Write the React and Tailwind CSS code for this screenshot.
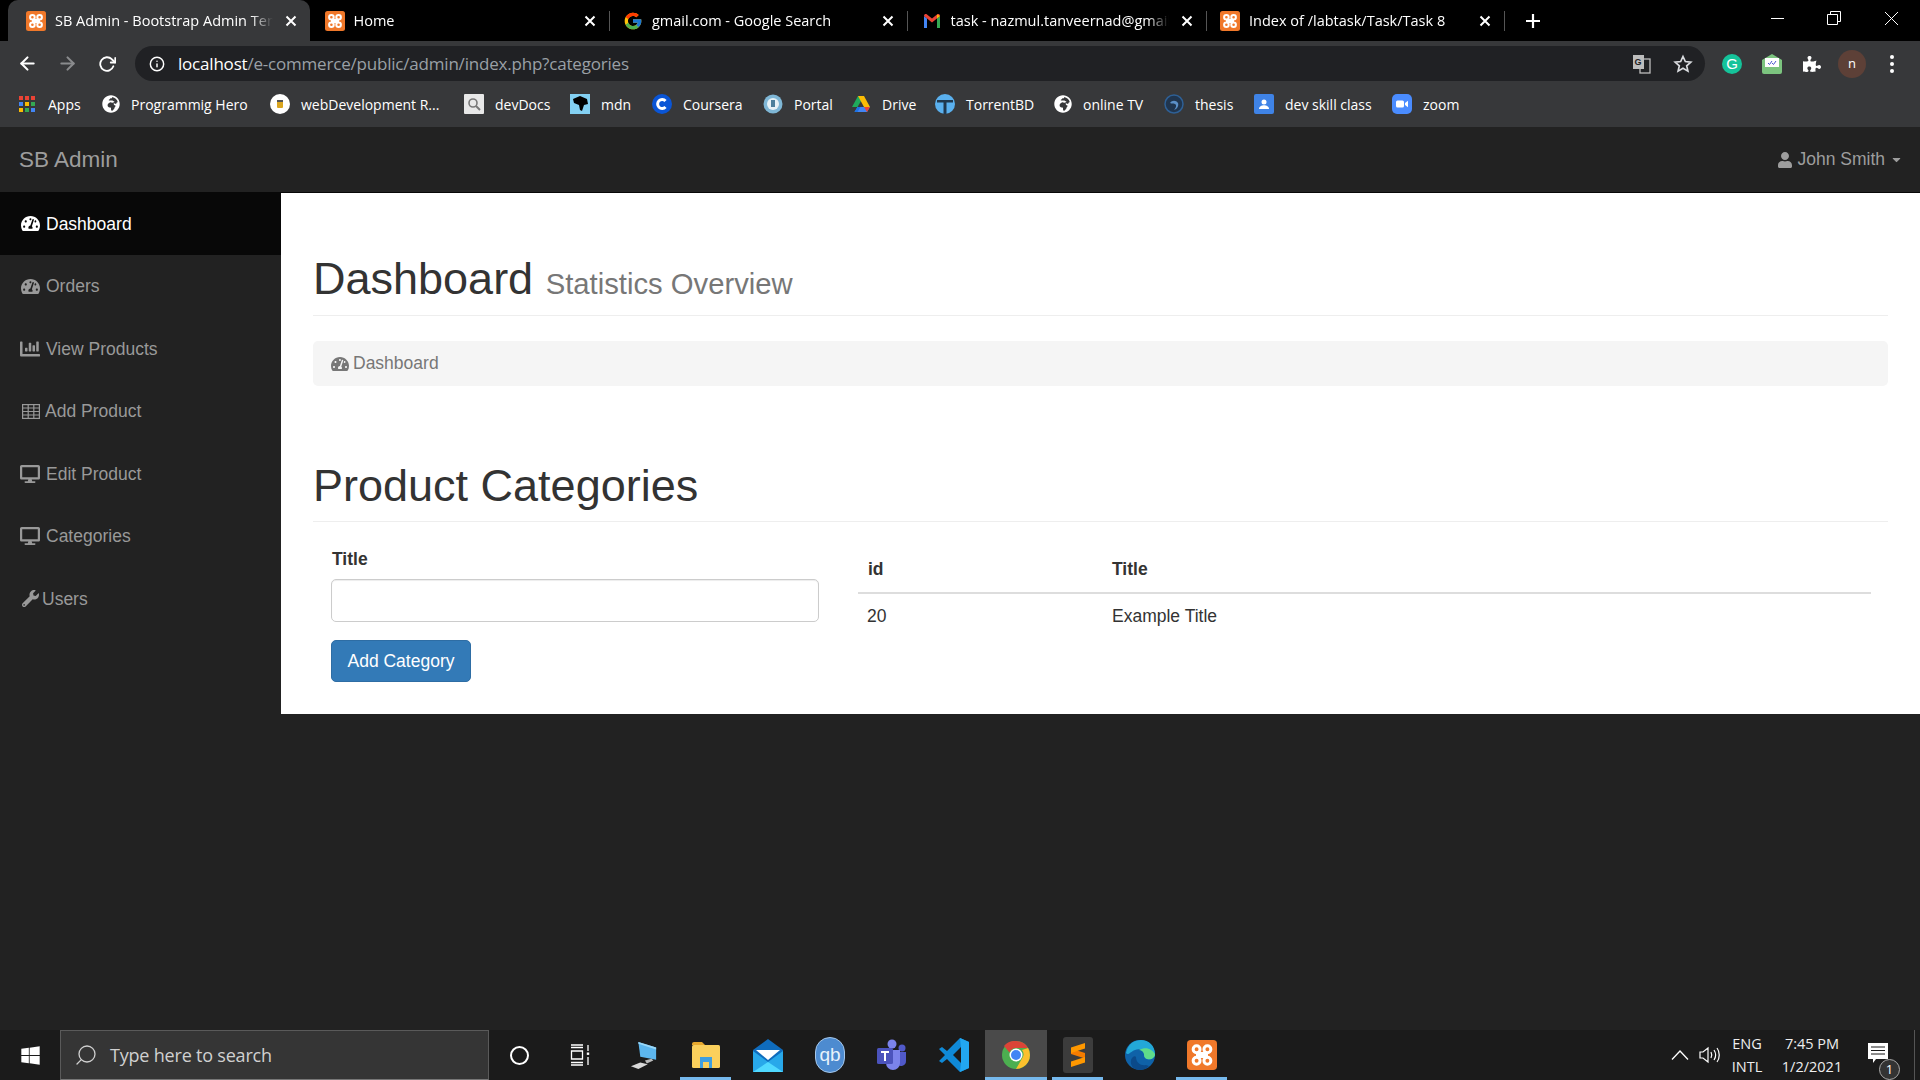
import React from "react";
import { FaTachometerAlt, FaChartBar, FaDesktop, FaWrench, FaUser, FaCaretDown, FaWindows, FaGlobeAfrica, FaPuzzlePiece } from "react-icons/fa";
import { FcGoogle } from "react-icons/fc";
import { FiArrowLeft, FiArrowRight, FiRotateCw, FiInfo, FiSearch } from "react-icons/fi";

const Xampp = ({ s = 20 }) => (
  <svg width={s} height={s} viewBox="0 0 20 20" className="shrink-0">
    <rect width="20" height="20" rx="2.5" fill="#f0782a" />
    <g fill="none" stroke="#fff" strokeWidth="2">
      <circle cx="6.4" cy="6.2" r="2.3" />
      <circle cx="13.6" cy="6.2" r="2.3" />
      <circle cx="6.4" cy="13.8" r="2.3" />
      <circle cx="13.6" cy="13.8" r="2.3" />
    </g>
    <rect x="6" y="8" width="8" height="4" fill="#fff" />
  </svg>
);
const Gmail = () => (
  <svg width="20" height="20" viewBox="0 0 20 20" className="shrink-0">
    <path d="M2 17V5l3 2.5V17z" fill="#4285f4" />
    <path d="M15 17V7.5L18 5v12z" fill="#34a853" />
    <path d="M2 5c0-2 2-2.500 3-1.500l5 4 5-4c1-1 3-.5 3 1.500l-8 6.500z" fill="#ea4335" />
    <path d="M15 3.500l3 1.500-3 2.500z" fill="#fbbc04" />
  </svg>
);
const Globe = () => <FaGlobeAfrica size={18} className="text-white ml-[1px] shrink-0" />;
const Apps = () => (
  <svg width="20" height="20" viewBox="0 0 20 20" className="shrink-0">
    {[["#ea4335", "#ea4335", "#ea4335"], ["#4285f4", "#fbbc04", "#34a853"], ["#fbbc04", "#34a853", "#4285f4"]].map((r, i) =>
      r.map((c, j) => <rect key={i + "-" + j} x={2 + j * 6} y={2 + i * 6} width="4" height="4" fill={c} />)
    )}
  </svg>
);
const Beer = () => (
  <svg width="20" height="20" viewBox="0 0 20 20" className="shrink-0">
    <circle cx="10" cy="10" r="10" fill="#fff" />
    <rect x="7" y="6" width="6" height="8" rx="1" fill="#d9a520" />
    <rect x="7" y="6" width="6" height="2" fill="#555" />
  </svg>
);
const DevDocs = () => (
  <svg width="20" height="20" viewBox="0 0 20 20" className="shrink-0">
    <rect width="20" height="20" rx="1" fill="#e8e8e8" />
    <circle cx="9" cy="9" r="4" fill="none" stroke="#777" strokeWidth="1.6" />
    <path d="M12 12l4 4" stroke="#777" strokeWidth="2" />
  </svg>
);
const Mdn = () => (
  <svg width="20" height="20" viewBox="0 0 20 20" className="shrink-0">
    <rect width="20" height="20" fill="#83d0f2" />
    <path d="M3 5l7-3 7 3 1 5-4 1-2 6-2-1-1-5-5-2z" fill="#000" />
  </svg>
);
const Coursera = () => (
  <svg width="20" height="20" viewBox="0 0 20 20" className="shrink-0">
    <circle cx="10" cy="10" r="10" fill="#0a55d6" />
    <path d="M13.500 7a4.500 4.500 0 1 0 0 6" fill="none" stroke="#fff" strokeWidth="3" />
  </svg>
);
const Portal = () => (
  <svg width="20" height="20" viewBox="0 0 20 20" className="shrink-0">
    <circle cx="10" cy="10" r="9.500" fill="#7fb7d6" />
    <circle cx="10" cy="10" r="6" fill="#e6f1f6" />
    <rect x="8" y="6" width="4" height="7" fill="#4c7f9c" />
  </svg>
);
const Drive = () => (
  <svg width="20" height="20" viewBox="0 0 20 20" className="shrink-0">
    <path d="M7 2h6l-6.500 11H1z" fill="#1faa5c" />
    <path d="M13 2l6 11h-6L7 2z" fill="#fbbc04" />
    <path d="M6.500 13H19l-3 5H3.500z" fill="#4285f4" />
    <path d="M3.500 18l3-5h3l-3 5z" fill="#1a73e8" />
    <path d="M13 13h6l-3 5z" fill="#ea4335" />
  </svg>
);
const Torrent = () => (
  <svg width="20" height="20" viewBox="0 0 20 20" className="shrink-0">
    <circle cx="10" cy="10" r="10" fill="#5ab0ee" />
    <path d="M2 6h16v2.500h-6.500V20h-3V8.500H2z" fill="#20384e" />
  </svg>
);
const Thesis = () => (
  <svg width="20" height="20" viewBox="0 0 20 20" className="shrink-0">
    <circle cx="10" cy="10" r="9" fill="#20354e" stroke="#2e6096" strokeWidth="1.500" />
    <path d="M6 9c2-3 6-3 8 0 1 3-1 6-4 7 2-2 3-5 1-6-2-1-3 0-5-1z" fill="#5b8fc7" />
  </svg>
);
const Classroom = () => (
  <svg width="20" height="20" viewBox="0 0 20 20" className="shrink-0">
    <rect width="20" height="20" rx="2" fill="#3f83e6" />
    <circle cx="10" cy="8" r="2.500" fill="#fff" />
    <path d="M5 15c0-5 10-5 10 0z" fill="#fff" />
  </svg>
);
const Zoom = () => (
  <svg width="20" height="20" viewBox="0 0 20 20" className="shrink-0">
    <rect width="20" height="20" rx="5" fill="#4a8cff" />
    <rect x="4" y="6.500" width="8" height="7" rx="1.500" fill="#fff" />
    <path d="M13 9l3-2.200v6.400L13 11z" fill="#fff" />
  </svg>
);

const tabs = [
  { t: "SB Admin - Bootstrap Admin Template", i: <Xampp />, active: true },
  { t: "Home", i: <Xampp /> },
  { t: "gmail.com - Google Search", i: <FcGoogle size={20} className="shrink-0" /> },
  { t: "task - nazmul.tanveernad@gmail.com", i: <Gmail /> },
  { t: "Index of /labtask/Task/Task 8", i: <Xampp /> },
];

const bookmarks = [
  { t: "Apps", i: <Apps />, w: "w-[83px]" },
  { t: "Programmig Hero", i: <Globe />, w: "w-[170px]" },
  { t: "webDevelopment R...", i: <Beer />, w: "w-[194px]" },
  { t: "devDocs", i: <DevDocs />, w: "w-[106px]" },
  { t: "mdn", i: <Mdn />, w: "w-[82px]" },
  { t: "Coursera", i: <Coursera />, w: "w-[111px]" },
  { t: "Portal", i: <Portal />, w: "w-[88px]" },
  { t: "Drive", i: <Drive />, w: "w-[84px]" },
  { t: "TorrentBD", i: <Torrent />, w: "w-[117px]" },
  { t: "online TV", i: <Globe />, w: "w-[112px]" },
  { t: "thesis", i: <Thesis />, w: "w-[90px]" },
  { t: "dev skill class", i: <Classroom />, w: "w-[138px]" },
  { t: "zoom", i: <Zoom />, w: "w-[90px]" },
];

const TableIcon = () => (
  <svg width="18" height="15" viewBox="0 0 18 15" fill="none" stroke="#999" strokeWidth="1.200">
    <rect x="0.600" y="0.600" width="16.800" height="13.800" />
    <path d="M0.600 4h16.800M0.600 7.500h16.800M0.600 11h16.800M6.200 0.600v13.800M11.800 0.600v13.800" />
  </svg>
);

const nav = [
  { t: "Dashboard", i: <FaTachometerAlt size={19} />, w: "w-[25px]", active: true },
  { t: "Orders", i: <FaTachometerAlt size={19} />, w: "w-[25px]" },
  { t: "View Products", i: <FaChartBar size={20} className="-ml-[1px]" />, w: "w-[25px]" },
  { t: "Add Product", i: <span className="ml-[1px] block"><TableIcon /></span>, w: "w-[24px]" },
  { t: "Edit Product", i: <FaDesktop size={20} className="-ml-[1px]" />, w: "w-[25px]" },
  { t: "Categories", i: <FaDesktop size={20} className="-ml-[1px]" />, w: "w-[25px]" },
  { t: "Users", i: <FaWrench size={17} className="ml-[1px]" />, w: "w-[21px]" },
];

const Explorer = () => (
  <svg width="30" height="28" viewBox="0 0 30 28">
    <path d="M1 3a2 2 0 0 1 2-2h8l3 3H1z" fill="#e8a92e" />
    <rect x="1" y="4" width="28" height="23" rx="1.500" fill="#fbd05c" />
    <path d="M9 27V16h12v11h-3v-6h-6v6z" fill="#3f9fe0" />
  </svg>
);
const Mail = () => (
  <svg width="30" height="34" viewBox="0 0 30 34">
    <path d="M0 12L15 1l15 11v22H0z" fill="#0f6cbd" />
    <path d="M3 12h24L15 22z" fill="#fff" />
    <path d="M0 13l15 11 15-11v21H0z" fill="#28a8ea" />
    <path d="M0 34l15-10 15 10z" fill="#50d9ff" />
  </svg>
);
const Computer = () => (
  <svg width="28" height="30" viewBox="0 0 30 32">
    <path d="M9 2l19 6v13l-17-3z" fill="#5cb6ee" />
    <path d="M9 2l19 6v2L9 4z" fill="#9ad7f7" />
    <path d="M1 28l10-4 8 2-10 5z" fill="#d8d8d8" />
    <path d="M16 22l7-2 2 2-7 3z" fill="#bbb" />
  </svg>
);
const Teams = () => (
  <svg width="30" height="32" viewBox="0 0 30 32">
    <circle cx="15" cy="5" r="4.500" fill="#7b83eb" />
    <circle cx="25" cy="9" r="3.500" fill="#5059c9" />
    <path d="M20 13h9v9a5 5 0 0 1-9 3z" fill="#5059c9" />
    <path d="M9 11h14v13a7 7 0 0 1-14 0z" fill="#7b83eb" />
    <rect x="0" y="9" width="16" height="16" rx="1.500" fill="#4b53bc" />
    <path d="M4 12h8v2H9v8H7v-8H4z" fill="#fff" />
  </svg>
);
const VsCode = () => (
  <svg width="30" height="36" viewBox="0 0 30 36">
    <path d="M21 1l9 4v26l-9 4-13-13-5 4-3-2 6-6-6-6 3-2 5 4zM22 10l-8 8 8 8z" fill="#0f8ad8" fillRule="evenodd" />
    <path d="M21 1l9 4v26l-9 4 1-9V10z" fill="#22a7f0" />
  </svg>
);
const Chrome = () => (
  <svg width="28" height="28" viewBox="0 0 28 28">
    <circle cx="14" cy="14" r="14" fill="#4caf50" />
    <path d="M14 0a14 14 0 0 1 12.100 7H14a7 7 0 0 0-6.500 4.500L2 5A14 14 0 0 1 14 0z" fill="#db4437" />
    <path d="M26.100 7A14 14 0 0 1 14 28l6-10.500A7 7 0 0 0 20 9z" fill="#fbc02d" />
    <circle cx="14" cy="14" r="6.500" fill="#fff" />
    <circle cx="14" cy="14" r="5" fill="#4285f4" />
  </svg>
);
const Sublime = () => (
  <svg width="30" height="36" viewBox="0 0 30 36">
    <rect width="30" height="36" rx="3" fill="#3c3c3c" />
    <path d="M8 11.500l14 4.500v5.500L8 17z" fill="#f57c00" />
    <path d="M22 6v5.500L8 16v-5.500z" fill="#ff9800" />
    <path d="M22 20v5.500L8 30v-5.500z" fill="#ff9800" />
  </svg>
);
const Edge = () => (
  <svg width="30" height="36" viewBox="0 0 30 36">
    <circle cx="15" cy="18" r="15" fill="#0f62a8" />
    <path d="M1 16C3 6 10 3 16 3c8 0 14 6 14 14 0 4-4 6-8 5-3-1-3-4-3-5 0-4-5-6-9-4-5 2-7 6-9 3z" fill="#23a8d8" />
    <path d="M30 17c0 4-4 6-8 5-3-1-3-4-3-5-1-3-3-4-5-4 7-4 13-1 16 4z" fill="#5fdc8a" />
    <path d="M11 20c0 6 5 9 10 8l3 1c-3 3-6 4-9 4-7 0-10-5-9-10 1-3 4-5 5-3z" fill="#0b4a8a" />
  </svg>
);
const Task = () => (
  <svg width="20" height="22" viewBox="0 0 20 22" fill="none" stroke="#fff" strokeWidth="1.300">
    <path d="M1 1h12M1 3.500h12M1 21h12M1 18.500h12M1.500 7h11v8h-11zM18 1v6M18 13v8" />
    <rect x="16.800" y="8.500" width="2.400" height="2.400" fill="#fff" stroke="none" />
  </svg>
);

const taskIcons = [
  { i: <Computer /> },
  { i: <Explorer />, line: "w-[51px]" },
  { i: <Mail /> },
  { i: <div className="w-[30px] h-[36px] flex items-center justify-center rounded-full bg-[#4d8bd0] border border-[#a5c7ea] text-[#e8f2fb] text-[19px] font-['Liberation_Sans',sans-serif]">qb</div> },
  { i: <Teams /> },
  { i: <VsCode /> },
  { i: <Chrome />, active: true },
  { i: <Sublime />, line: "w-[51px]" },
  { i: <Edge /> },
  { i: <Xampp s={30} />, line: "w-[51px]" },
];

const uiFont = "font-['Open_Sans',sans-serif]";

export default function App() {
  return (
    <div className="min-h-screen h-screen flex flex-col bg-[#222222] overflow-hidden font-['Liberation_Sans',sans-serif]">
      {/* tab strip */}
      <div className={`h-[41px] bg-black flex shrink-0 pl-[8px] text-white text-[14.500px] ${uiFont}`}>
        {tabs.map((t) => (
          <div key={t.t} className={`relative h-[41px] flex items-center pl-[18px] ${t.active ? "w-[302px] -mr-[3.500px] bg-[#37383a] rounded-t-[10px]" : "w-[298.500px]"}`}>
            {t.i}
            <div className="relative ml-[9px] w-[218px] overflow-hidden whitespace-nowrap [mask-image:linear-gradient(to_right,black_90%,transparent)]">
              {t.t}
            </div>
            <svg width="12" height="12" viewBox="0 0 12 12" className="absolute left-[277px] top-[15px]" stroke="#fff" strokeWidth="2">
              <path d="M1.500 1.500l9 9M10.500 1.500l-9 9" />
            </svg>
            {!t.active && <div className="absolute left-[302px] top-[11px] w-[1px] h-[20px] bg-[#555]" />}
          </div>
        ))}
        <svg width="16" height="16" viewBox="0 0 16 16" className="ml-[24px] mt-[13px]" stroke="#fff" strokeWidth="2.200">
          <path d="M8 1v14M1 8h14" />
        </svg>
        <div className="ml-auto flex h-[41px]">
          <div className="w-[56px] h-[36px] flex items-center justify-center">
            <div className="w-[13px] h-[1px] bg-white" />
          </div>
          <div className="w-[58px] h-[36px] flex items-center justify-center">
            <svg width="14" height="14" viewBox="0 0 14 14" fill="none" stroke="#fff">
              <path d="M.5 3.500h10v10H.5zM3.500 3.500v-3h10v10h-3" />
            </svg>
          </div>
          <div className="w-[57px] h-[36px] flex items-center justify-center">
            <svg width="15" height="15" viewBox="0 0 15 15" stroke="#fff">
              <path d="M1 1l13 13M14 1L1 14" />
            </svg>
          </div>
        </div>
      </div>

      {/* toolbar */}
      <div className="h-[44px] bg-[#37383a] flex items-center shrink-0 pl-[7px] pt-[1px]">
        <div className="w-[40px] flex justify-center text-white"><FiArrowLeft size={21} strokeWidth={2.4} /></div>
        <div className="w-[40px] flex justify-center text-[#8a8b8d]"><FiArrowRight size={21} strokeWidth={2.4} /></div>
        <div className="w-[40px] flex justify-center text-white"><FiRotateCw size={18} strokeWidth={2.4} /></div>
        <div className="ml-[8px] w-[1570px] h-[35px] rounded-full bg-[#202124] flex items-center pl-[14px] pr-[12px]">
          <FiInfo size={16} className="text-white" strokeWidth={2.2} />
          <div className={`ml-[13px] mt-[1px] text-[17px] text-[#9aa0a6] tracking-[-0.2px] ${uiFont}`}>
            <span className="text-white">localhost</span>/e-commerce/public/admin/index.php?categories
          </div>
          <svg width="20" height="20" viewBox="0 0 20 20" className="ml-auto">
            <rect x="1" y="1" width="11" height="14" fill="#bdbdbd" />
            <rect x="8" y="5" width="10" height="14" fill="none" stroke="#bdbdbd" strokeWidth="1.300" />
            <path d="M9 6h3v9H9z" fill="#bdbdbd" />
            <text x="2.500" y="11" fontSize="9" fontWeight="700" fill="#202124" fontFamily="Liberation Sans">G</text>
          </svg>
          <svg width="20" height="20" viewBox="0 0 24 24" fill="none" stroke="#dadce0" strokeWidth="2" className="ml-[21px]">
            <path d="M12 3l2.800 6 6.600.7-5 4.400 1.500 6.500L12 17.200l-5.900 3.400 1.500-6.500-5-4.400L9.200 9z" />
          </svg>
        </div>
        <div className="ml-[7px] w-[40px] flex justify-center">
          <div className="w-[20px] h-[20px] rounded-full bg-[#15c39a] flex items-center justify-center text-white text-[15px] leading-none font-['Liberation_Sans',sans-serif]">G</div>
        </div>
        <div className="w-[40px] flex justify-center">
          <svg width="20" height="20" viewBox="0 0 20 20">
            <path d="M0 6l10-6 10 6v12a2 2 0 0 1-2 2H2a2 2 0 0 1-2-2z" fill="#7cc47f" />
            <rect x="3" y="4" width="14" height="9" fill="#fff" />
            <path d="M6 9l1.500 1.500L10 7M10 9l1.500 1.500L14 7" stroke="#4a56d0" fill="none" />
          </svg>
        </div>
        <div className="w-[40px] flex justify-center text-white"><FaPuzzlePiece size={18} /></div>
        <div className="w-[40px] flex justify-center">
          <div className={`w-[28px] h-[28px] rounded-full bg-[#5d4037] text-white text-[13px] flex items-center justify-center ${uiFont}`}>n</div>
        </div>
        <div className="w-[40px] flex flex-col items-center gap-[3px]">
          <div className="w-[4px] h-[4px] rounded-full bg-white" />
          <div className="w-[4px] h-[4px] rounded-full bg-white" />
          <div className="w-[4px] h-[4px] rounded-full bg-white" />
        </div>
      </div>

      {/* bookmarks */}
      <div className={`h-[42px] bg-[#37383a] flex items-center shrink-0 pl-[17px] pb-[4px] text-white text-[14px] ${uiFont}`}>
        {bookmarks.map((b) => (
          <div key={b.t} className={`flex items-center ${b.w} whitespace-nowrap`}>
            <div className="w-[20px] h-[20px] flex items-center justify-center shrink-0">{b.i}</div>
            <span className="ml-[11px]">{b.t}</span>
          </div>
        ))}
      </div>

      {/* navbar */}
      <div className="h-[66px] bg-[#222222] border-b border-[#080808] flex items-center justify-between shrink-0 pl-[19px] pr-[17px] text-[#9d9d9d]">
        <div className="text-[22.500px]">SB Admin</div>
        <div className="flex items-center text-[17.500px]">
          <FaUser size={16} className="mr-[4px]" />
          John Smith
          <FaCaretDown size={13} className="ml-[5px]" />
        </div>
      </div>

      {/* page */}
      <div className="flex flex-1 min-h-0 items-start">
        <div className="w-[281px] shrink-0 text-[17.500px] -mt-[1px] text-[#999999]">
          {nav.map((n) => (
            <div key={n.t} className={`h-[62.500px] flex items-center pl-[21px] pt-[1px] ${n.active ? "bg-[#080808] text-white" : ""}`}>
              <div className={`${n.w} shrink-0`}>{n.i}</div>
              <span>{n.t}</span>
            </div>
          ))}
        </div>
        <div className="flex-1 bg-white px-[32px] pt-[60.500px] pb-[32px] text-[17.500px] text-[#333333]">
          <div className="border-b border-[#eeeeee] pb-[12px] leading-[49.500px] text-[45px]">
            Dashboard <span className="text-[29.250px] leading-none text-[#777777]">Statistics Overview</span>
          </div>
          <div className="mt-[25px] h-[45px] rounded-[5px] bg-[#f5f5f5] flex items-center pl-[18px] text-[#777777]">
            <FaTachometerAlt size={18} className="mr-[4px]" />
            Dashboard
          </div>
          <div className="mt-[74.500px] border-b border-[#eeeeee] pb-[11px] leading-[49.500px] text-[45px]">
            Product Categories
          </div>
          <div className="flex">
            <div className="ml-[18px] w-[488px] pt-[25px]">
              <div className="font-bold leading-[25px] ml-[1px]">Title</div>
              <div className="mt-[7px] h-[43px] rounded-[5px] border border-[#cccccc] bg-white shadow-[inset_0_1px_1px_rgba(0,0,0,0.075)]" />
              <div className="mt-[18px] w-[140px] h-[42px] rounded-[5px] bg-[#337ab7] border border-[#2e6da4] text-white flex items-center justify-center">
                Add Category
              </div>
            </div>
            <div className="ml-[39px] w-[1013px] pt-[26px]">
              <div className="flex h-[46px] items-center border-b-2 border-[#dddddd] font-bold pb-[2px]">
                <div className="w-[254px] pl-[10px]">id</div>
                <div>Title</div>
              </div>
              <div className="flex h-[45px] items-center">
                <div className="w-[254px] pl-[9px]">20</div>
                <div>Example Title</div>
              </div>
            </div>
          </div>
        </div>
      </div>

      {/* taskbar */}
      <div className="h-[50px] shrink-0 bg-[#1b1b1b] flex items-stretch text-white">
        <div className="w-[60px] flex items-center justify-center"><FaWindows size={21} /></div>
        <div className={`w-[429px] bg-[#353535] border border-[#5a5a5a] border-b-[#777] flex items-center pl-[13px] text-[#d0d0d0] text-[18px] ${uiFont}`}>
          <FiSearch size={24} className="-scale-x-100" strokeWidth={1.3} />
          <span className="ml-[12px] tracking-[-0.2px]">Type here to search</span>
        </div>
        <div className="w-[61px] flex items-center justify-center">
          <div className="w-[19px] h-[19px] rounded-full border-[2.500px] border-white" />
        </div>
        <div className="w-[60px] mr-[3px] flex items-center justify-center"><Task /></div>
        {taskIcons.map((t, i) => (
          <div key={i} className={`relative w-[62px] flex items-center justify-center ${t.active ? "bg-[#4a4a4a]" : ""}`}>
            {t.i}
            {t.active && <div className="absolute bottom-0 left-0 right-0 h-[3px] bg-[#76b9ed]" />}
            {t.line && <div className={`absolute bottom-0 left-[5px] h-[3px] bg-[#76b9ed] ${t.line}`} />}
          </div>
        ))}
        <div className={`ml-auto flex items-center text-[14.500px] text-[#eeeeee] ${uiFont}`}>
          <div className="w-[30px] flex justify-center">
            <svg width="18" height="10" viewBox="0 0 18 10" fill="none" stroke="#fff" strokeWidth="1.300"><path d="M1 9.500l8-8.500 8 8.500" /></svg>
          </div>
          <div className="w-[30px] flex justify-center">
            <svg width="22" height="18" viewBox="0 0 22 18" fill="none" stroke="#fff" strokeWidth="1.200">
              <path d="M1 6h3l5-4v14l-5-4H1zM12 6c1 2 1 4 0 6M15 4c2 3 2 7 0 10M18 2c3 4 3 10 0 14" />
            </svg>
          </div>
          <div className="w-[44px] text-center leading-[23px]"><div>ENG</div><div>INTL</div></div>
          <div className="w-[86px] text-center leading-[23px]"><div>7:45 PM</div><div>1/2/2021</div></div>
          <div className="relative w-[50px] flex justify-center">
            <svg width="20" height="20" viewBox="0 0 20 20" className="-ml-[4px] -mt-[4px]">
              <path d="M0 0h20v16H8l-3 4v-4H0z" fill="#fff" />
              <path d="M3 4h14M3 7.500h14M3 11h14" stroke="#1b1b1b" />
            </svg>
            <div className="absolute left-[24px] top-[12px] w-[21px] h-[21px] rounded-full bg-[#333] border border-[#aaa] text-white text-[13px] flex items-center justify-center">1</div>
          </div>
          <div className="w-[15px] h-[50px] pl-[9px]"><div className="w-[1px] h-full bg-[#555]" /></div>
        </div>
      </div>
    </div>
  );
}
